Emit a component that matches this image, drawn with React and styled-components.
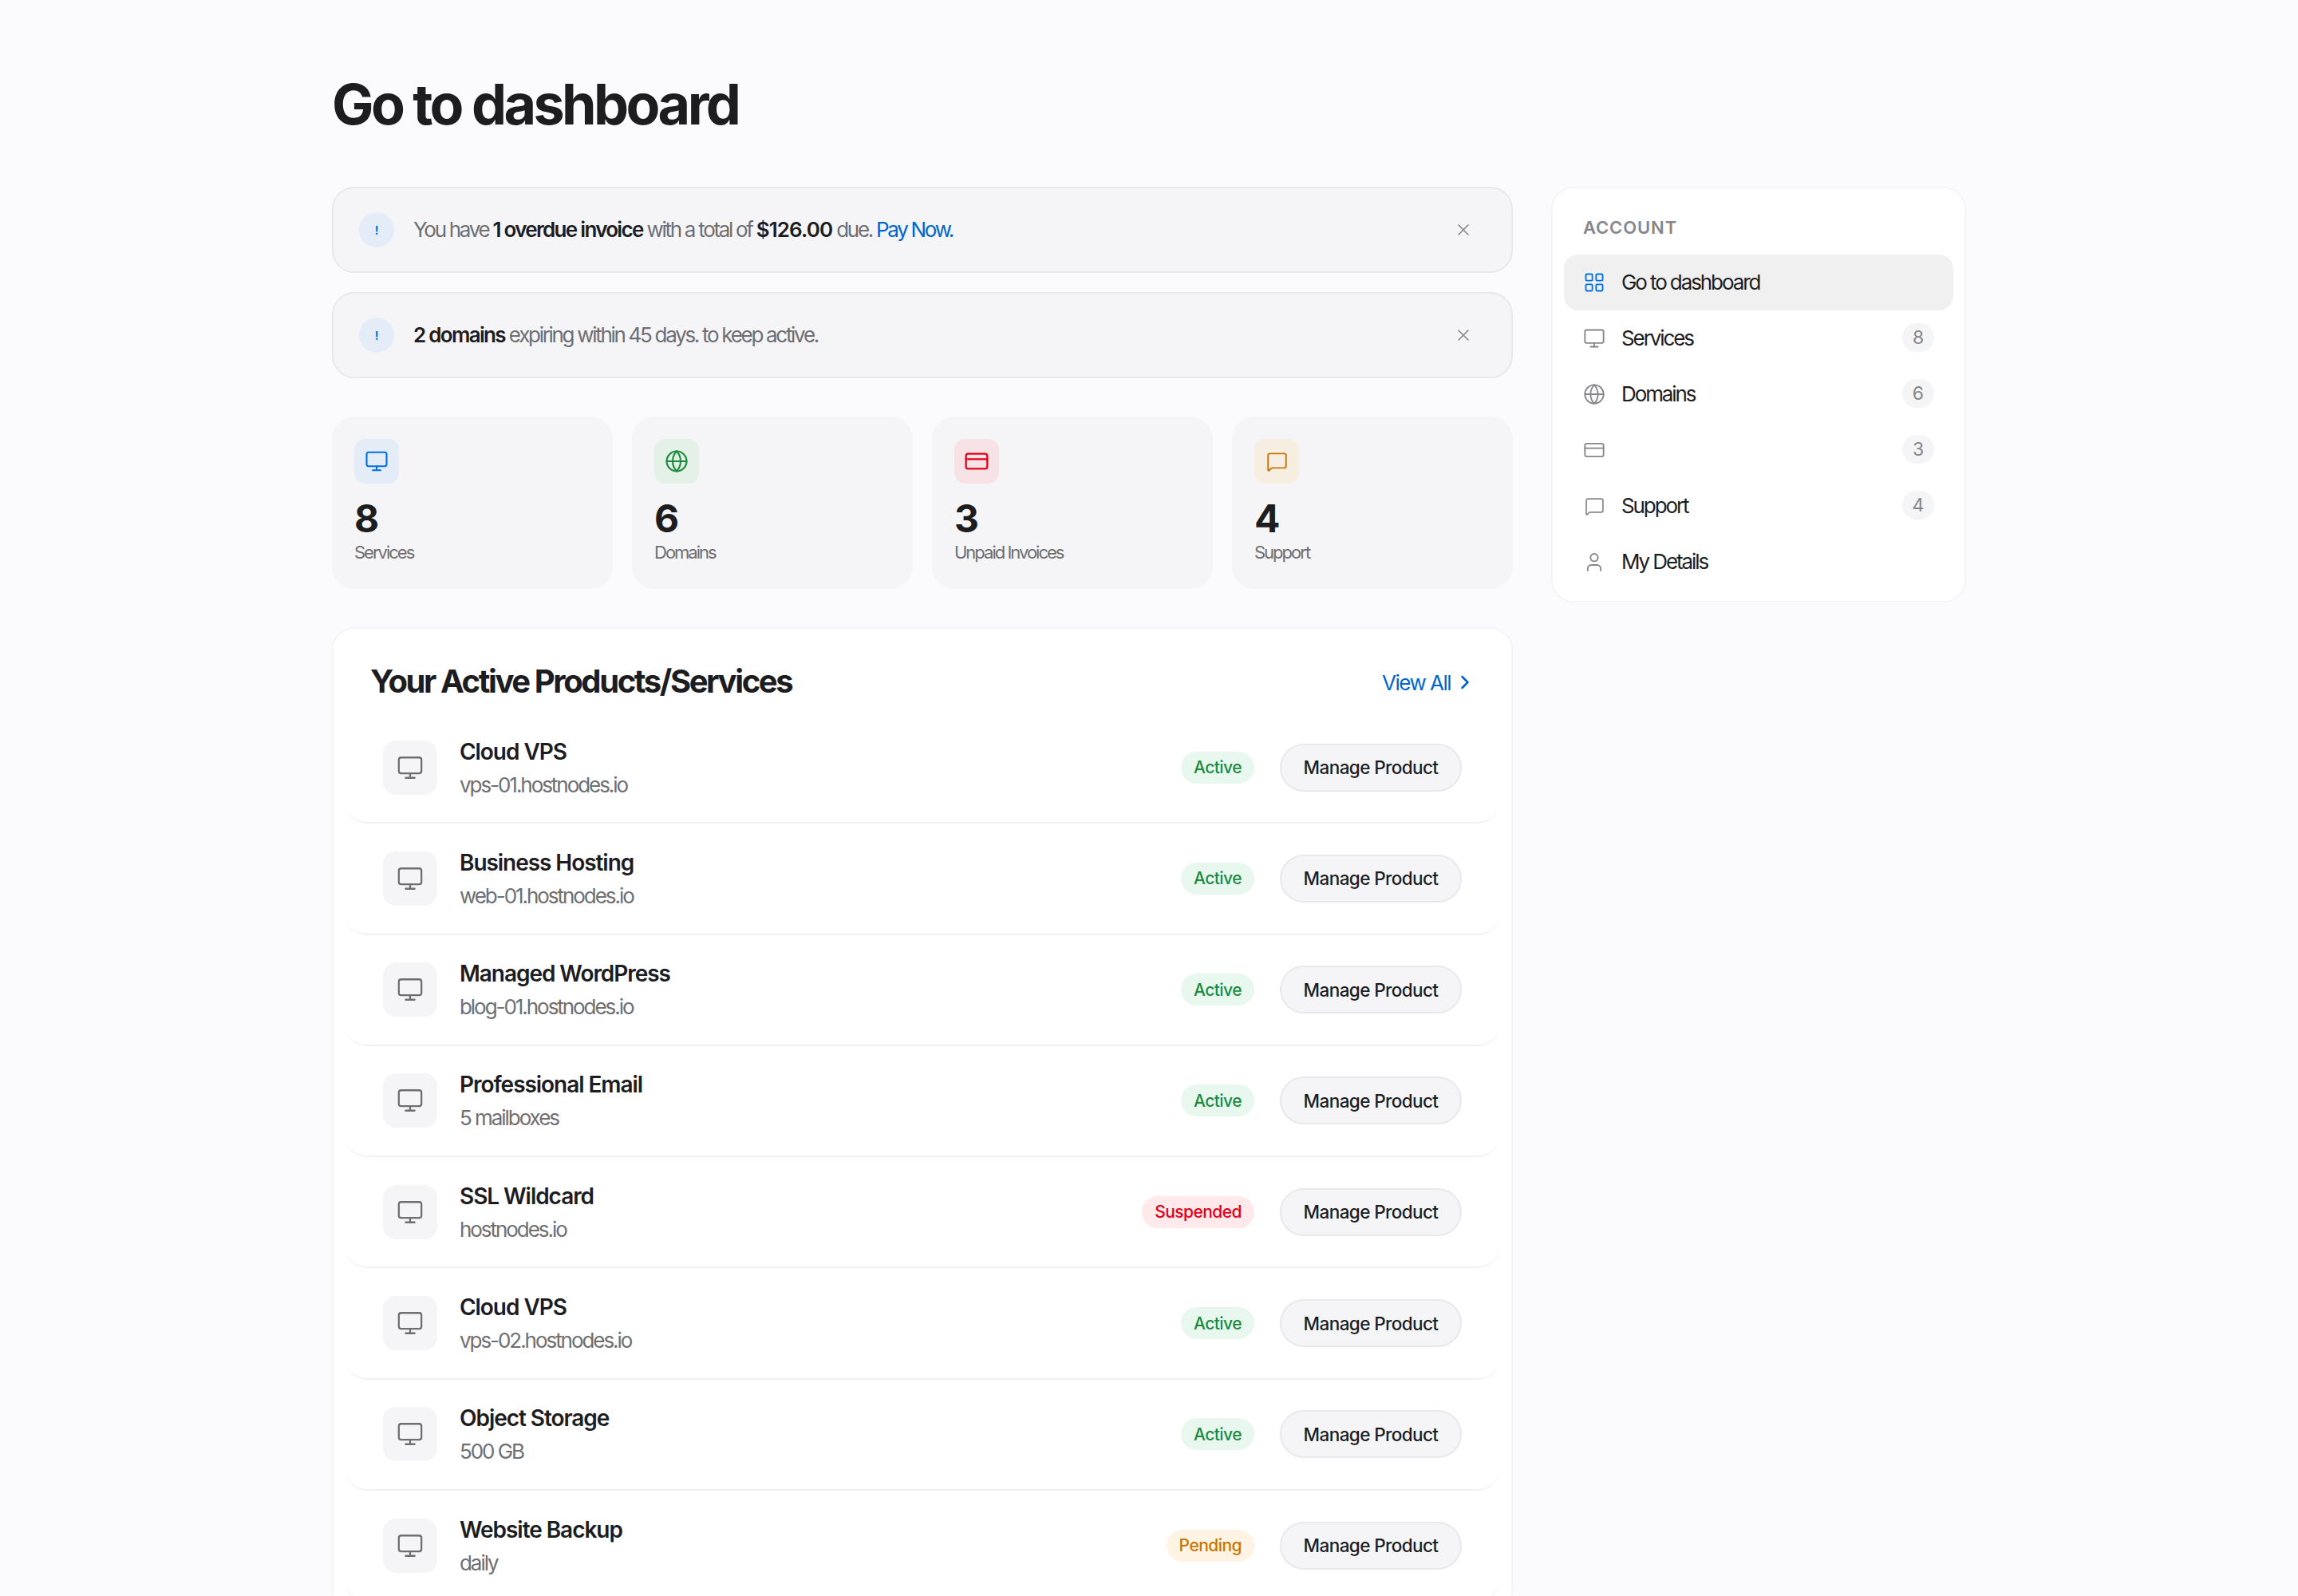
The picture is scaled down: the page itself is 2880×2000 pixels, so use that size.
import React from 'react';
import styled, { createGlobalStyle } from 'styled-components';
import { Monitor, Globe, CreditCard, MessageSquare, User, LayoutGrid, X, ChevronRight } from 'lucide-react';

const services = [
  { name: 'Cloud VPS', sub: 'vps-01.hostnodes.io', status: 'Active' },
  { name: 'Business Hosting', sub: 'web-01.hostnodes.io', status: 'Active' },
  { name: 'Managed WordPress', sub: 'blog-01.hostnodes.io', status: 'Active' },
  { name: 'Professional Email', sub: '5 mailboxes', status: 'Active' },
  { name: 'SSL Wildcard', sub: 'hostnodes.io', status: 'Suspended' },
  { name: 'Cloud VPS', sub: 'vps-02.hostnodes.io', status: 'Active' },
  { name: 'Object Storage', sub: '500 GB', status: 'Active' },
  { name: 'Website Backup', sub: 'daily', status: 'Pending' },
];

const stats = [
  { icon: Monitor, size: 30, value: 8, label: 'Services', bg: '#e3ecf7', fg: '#0071e3' },
  { icon: Globe, size: 30, value: 6, label: 'Domains', bg: '#e3f1e7', fg: '#1d8a3e' },
  { icon: CreditCard, size: 32, value: 3, label: 'Unpaid Invoices', bg: '#f7e3e5', fg: '#e0001b' },
  { icon: MessageSquare, size: 27, value: 4, label: 'Support', bg: '#f7eee2', fg: '#c77700' },
];

const menu = [
  { icon: LayoutGrid, size: 28, label: 'Go to dashboard', active: true },
  { icon: Monitor, size: 28, label: 'Services', count: 8 },
  { icon: Globe, size: 28, label: 'Domains', count: 6 },
  { icon: CreditCard, size: 30, label: '', count: 3 },
  { icon: MessageSquare, size: 25, label: 'Support', count: 4 },
  { icon: User, size: 29, label: 'My Details' },
];

const statusColors = {
  Active: { bg: '#e9f8ee', fg: '#1d8a3e' },
  Suspended: { bg: '#ffe9ea', fg: '#e0001b' },
  Pending: { bg: '#fff3e3', fg: '#c77700' },
};

const App = () => {
  return (
    <>
      <GlobalStyle />
      <Page>
        <Title>Go to dashboard</Title>
        <Columns>
          <Main>
            <Alert>
              <AlertIcon>!</AlertIcon>
              <AlertText>
                You have <strong>1 overdue invoice</strong> with a total of <Amount>$126.00</Amount> due. <PayLink>Pay Now.</PayLink>
              </AlertText>
              <CloseButton><X size={24} strokeWidth={1.6} /></CloseButton>
            </Alert>
            <Alert>
              <AlertIcon>!</AlertIcon>
              <AlertText>
                <strong>2 domains</strong> expiring within 45 days. to keep active.
              </AlertText>
              <CloseButton><X size={24} strokeWidth={1.6} /></CloseButton>
            </Alert>

            <StatGrid>
              {stats.map((s) => (
                <StatCard key={s.label}>
                  <StatIcon $bg={s.bg} $fg={s.fg}><s.icon size={s.size} strokeWidth={1.7} /></StatIcon>
                  <StatValue>{s.value}</StatValue>
                  <StatLabel>{s.label}</StatLabel>
                </StatCard>
              ))}
            </StatGrid>

            <ProductsCard>
              <ProductsHeader>
                <ProductsTitle>Your Active Products/Services</ProductsTitle>
                <ViewAll>View All <ChevronRight size={28} strokeWidth={2.2} /></ViewAll>
              </ProductsHeader>
              {services.map((p) => (
                <ProductRow key={p.sub}>
                  <ProductIcon><Monitor size={34} strokeWidth={1.6} /></ProductIcon>
                  <ProductInfo>
                    <ProductName>{p.name}</ProductName>
                    <ProductSub>{p.sub}</ProductSub>
                  </ProductInfo>
                  <StatusBadge $status={p.status}>{p.status}</StatusBadge>
                  <ManageButton>Manage Product</ManageButton>
                </ProductRow>
              ))}
            </ProductsCard>
          </Main>

          <Sidebar>
            <SidebarLabel>ACCOUNT</SidebarLabel>
            {menu.map((m, i) => (
              <MenuItem key={i} $active={m.active}>
                <MenuIcon $active={m.active}><m.icon size={m.size} strokeWidth={1.6} /></MenuIcon>
                {m.label && <MenuText>{m.label}</MenuText>}
                {m.count !== undefined && <MenuCount>{m.count}</MenuCount>}
              </MenuItem>
            ))}
          </Sidebar>
        </Columns>
      </Page>
    </>
  );
};

export default App;

const GlobalStyle = createGlobalStyle`
  * { box-sizing: border-box; }
  html, body {
    margin: 0;
    background: #fbfbfd;
    font-family: Inter, "Liberation Sans", sans-serif;
    color: #1d1d1f;
  }
`;

const Page = styled.div`
  width: 2048px;
  margin: 0 auto;
  padding-top: 90px;
`;

const Title = styled.h1`
  margin: 0 0 62px;
  font-size: 70px;
  line-height: 82px;
  font-weight: 700;
  letter-spacing: -3.6px;
  color: #1d1d1f;
`;

const Columns = styled.div`
  display: flex;
  align-items: flex-start;
  gap: 48px;
`;

const Main = styled.div`
  width: 1480px;
  display: flex;
  flex-direction: column;
`;

const Alert = styled.div`
  display: flex;
  align-items: center;
  height: 108px;
  margin-bottom: 24px;
  padding: 0 48px 0 32px;
  background: #f5f5f7;
  border: 2px solid #e8e8ed;
  border-radius: 28px;
`;

const AlertIcon = styled.span`
  flex: none;
  width: 44px;
  height: 44px;
  display: flex;
  align-items: center;
  justify-content: center;
  margin-right: 24px;
  border-radius: 50%;
  background: #e3ecf7;
  color: #0071e3;
  font-size: 14px;
  font-weight: 700;
`;

const AlertText = styled.p`
  flex: 1;
  margin: 0 0 2px;
  font-size: 26px;
  letter-spacing: -2.3px;
  color: #6e6e73;

  strong {
    font-weight: 600;
    letter-spacing: -1.7px;
    color: #1d1d1f;
  }
`;

const Amount = styled.strong`
  && {
    letter-spacing: -0.9px;
  }
`;

const PayLink = styled.a`
  color: #0066cc;
`;

const CloseButton = styled.span`
  display: flex;
  color: #86868b;
`;

const StatGrid = styled.div`
  display: grid;
  grid-template-columns: repeat(4, 1fr);
  gap: 24px;
  margin: 24px 0 48px;
`;

const StatCard = styled.div`
  height: 216px;
  padding: 28px;
  background: #f5f5f7;
  border-radius: 28px;
`;

const StatIcon = styled.div`
  width: 56px;
  height: 56px;
  display: flex;
  align-items: center;
  justify-content: center;
  border-radius: 14px;
  background: ${(p) => p.$bg};
  color: ${(p) => p.$fg};
`;

const StatValue = styled.div`
  margin-top: 16px;
  font-size: 48px;
  line-height: 56px;
  font-weight: 700;
`;

const StatLabel = styled.div`
  margin-top: -1px;
  font-size: 22px;
  line-height: 30px;
  letter-spacing: -2px;
  color: #6e6e73;
`;

const ProductsCard = styled.div`
  padding: 24px 14px 14px;
  background: #fff;
  border: 2px solid #f5f5f7;
  border-radius: 28px;
`;

const ProductsHeader = styled.div`
  display: flex;
  align-items: center;
  justify-content: space-between;
  height: 70px;
  margin-bottom: 11px;
  padding: 12px 30px 0 32px;
`;

const ProductsTitle = styled.h2`
  margin: 0;
  font-size: 40px;
  font-weight: 700;
  letter-spacing: -2.4px;
`;

const ViewAll = styled.a`
  display: flex;
  align-items: center;
  gap: 4px;
  margin-top: 4px;
  font-size: 26px;
  letter-spacing: -1.5px;
  color: #0066cc;
`;

const ProductRow = styled.div`
  display: flex;
  align-items: center;
  padding: 26.65px 48px;
  border-bottom: 2px solid #f2f2f5;
  border-radius: 28px;
`;

const ProductIcon = styled.div`
  flex: none;
  width: 68px;
  height: 68px;
  display: flex;
  align-items: center;
  justify-content: center;
  margin-right: 28px;
  border-radius: 16px;
  background: #f5f5f7;
  color: #6e6e73;
`;

const ProductInfo = styled.div`
  flex: 1;
  padding-top: 2px;
`;

const ProductName = styled.div`
  font-size: 28px;
  line-height: 40px;
  font-weight: 600;
  letter-spacing: -1.05px;
`;

const ProductSub = styled.div`
  margin-top: 2px;
  font-size: 26px;
  line-height: 40px;
  letter-spacing: -2.05px;
  color: #6e6e73;
`;

const StatusBadge = styled.span`
  margin-right: 32px;
  padding: 0 16px;
  height: 40px;
  display: flex;
  align-items: center;
  border-radius: 20px;
  font-size: 21px;
  font-weight: 450;
  letter-spacing: -0.55px;
  background: ${(p) => statusColors[p.$status].bg};
  color: ${(p) => statusColors[p.$status].fg};
`;

const ManageButton = styled.button`
  width: 228px;
  height: 60px;
  padding: 0;
  background: #f5f5f7;
  border: 2px solid #e8e8ed;
  border-radius: 30px;
  font-family: inherit;
  font-size: 22.5px;
  font-weight: 450;
  letter-spacing: -0.6px;
  color: #1d1d1f;
`;

const Sidebar = styled.aside`
  width: 520px;
  padding: 34px 14px 14px;
  background: #fff;
  border: 2px solid #f5f5f7;
  border-radius: 28px;
`;

const SidebarLabel = styled.div`
  margin: 0 0 19px 24px;
  font-size: 22px;
  line-height: 30px;
  font-weight: 600;
  letter-spacing: 0.04em;
  color: #86868b;
`;

const MenuItem = styled.div`
  display: flex;
  align-items: center;
  min-height: 70px;
  padding: 16px 24px;
  border-radius: 18px;
  background: ${(p) => (p.$active ? '#f0f0f0' : 'transparent')};
`;

const MenuIcon = styled.span`
  flex: none;
  width: 28px;
  display: flex;
  justify-content: center;
  margin-right: 20px;
  color: ${(p) => (p.$active ? '#0071e3' : '#86868b')};
`;

const MenuText = styled.span`
  flex: 1;
  font-size: 26px;
  line-height: 38px;
  letter-spacing: -2.1px;
`;

const MenuCount = styled.span`
  margin-left: auto;
  margin-top: -2px;
  width: 40px;
  height: 36px;
  display: flex;
  align-items: center;
  justify-content: center;
  border-radius: 18px;
  background: #f5f5f7;
  font-size: 23px;
  color: #86868b;
`;
